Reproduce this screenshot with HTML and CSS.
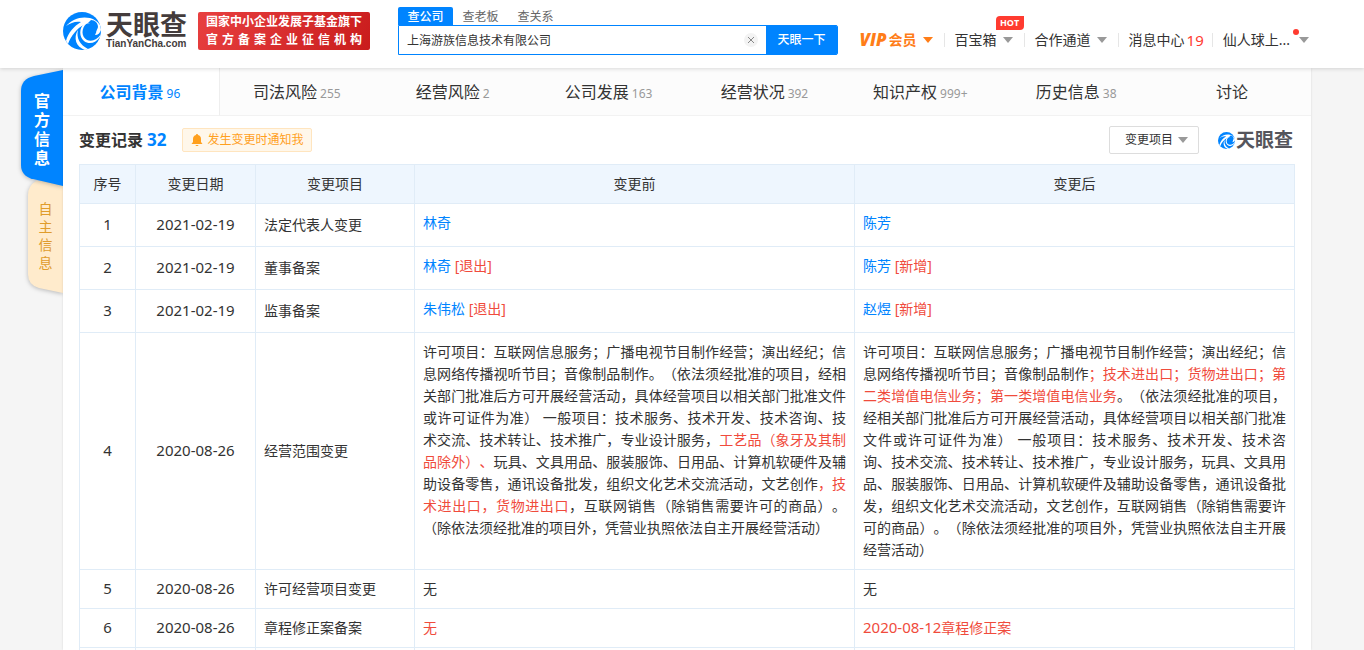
FILE: index.html
```html
<!DOCTYPE html>
<html lang="zh-CN">
<head>
<meta charset="utf-8">
<title>上海游族信息技术有限公司 - 天眼查</title>
<link rel="stylesheet" href="styles.css">
</head>
<body>
<svg class="defs" width="0" height="0" aria-hidden="true">
  <symbol id="swirl" viewBox="0 0 38 38">
    <circle cx="19" cy="19" r="19" fill="#0084ff"/>
    <path d="M3 14C9 7 18 4 27 6C31 7 34 9 37 13L38 18C37 21 35 23 32 23C34 20 34 16 32 13C29 10 25 11 21 13C14 16 8 24 5 32L3 29C5 21 11 14 18 10C12 9 8 11 3 14Z" fill="#fff"/>
    <path d="M24 11C18 16 18 25 24 28C29 30 34 28 38 22L37 25C33 31 26 33 21 29C16 25 16 16 21 12Z" fill="#fff"/>
    <path d="M15 18C13 26 17 33 25 37L22 38C13 35 10 26 15 18Z" fill="#fff"/>
    <path d="M28 8C32 8 35 11 35 15C34 19 31 22 27 22C25 22 24 21 24 20C29 20 32 16 30 13C29 11 27 11 25 11Z" fill="#0084ff"/>
  </symbol>
</svg>

<header class="header">
  <a class="logo" href="#">
    <svg class="logo-icon" aria-hidden="true"><use href="#swirl"/></svg>
    <span class="logo-text">
      <span class="logo-cn">天眼查</span>
      <span class="logo-en">TianYanCha.com</span>
    </span>
  </a>
  <div class="badge">
    <p>国家中小企业发展子基金旗下</p>
    <p>官方备案企业征信机构</p>
  </div>
  <form class="search">
    <div class="search-tabs">
      <button type="button" class="search-tab active">查公司</button>
      <button type="button" class="search-tab">查老板</button>
      <button type="button" class="search-tab">查关系</button>
    </div>
    <div class="search-box">
      <input class="search-input" type="text" aria-label="搜索公司" value="上海游族信息技术有限公司">
      <button type="reset" class="clear" aria-label="清空">
        <svg width="6" height="6" viewBox="0 0 6 6"><path d="M0 0L6 6M6 0L0 6" stroke="#888" fill="none"/></svg>
      </button>
      <button type="submit" class="search-btn">天眼一下</button>
    </div>
  </form>
  <nav class="nav">
    <a href="#" class="vip"><i>VIP</i>会员<span class="caret"></span></a>
    <a href="#">百宝箱<span class="caret"></span><em class="hot">HOT</em></a>
    <a href="#">合作通道<span class="caret"></span></a>
    <a href="#" class="messages">消息中心<span class="msg-count">19</span></a>
    <a href="#" class="user">仙人球上...<span class="caret"></span><span class="dot"></span></a>
  </nav>
</header>

<div class="page">
  <aside class="side">
    <a href="#" class="side-tab official">
      <svg viewBox="0 0 42 116" preserveAspectRatio="none" aria-hidden="true"><path d="M42 0L13 6Q0 9 0 21V95Q0 106 12 109L42 116Z" fill="#0084ff"/></svg>
      <span>官方信息</span>
    </a>
    <a href="#" class="side-tab own">
      <svg viewBox="0 0 35 112" preserveAspectRatio="none" aria-hidden="true"><path d="M35 0H8Q0 5 0 14V93Q0 104 11 107L35 112Z" fill="#ffebcc"/></svg>
      <span>自主信息</span>
    </a>
  </aside>

  <main class="main">
    <nav class="tabs">
      <a href="#" class="tab active">公司背景<span>96</span></a>
      <a href="#" class="tab">司法风险<span>255</span></a>
      <a href="#" class="tab">经营风险<span>2</span></a>
      <a href="#" class="tab">公司发展<span>163</span></a>
      <a href="#" class="tab">经营状况<span>392</span></a>
      <a href="#" class="tab">知识产权<span>999+</span></a>
      <a href="#" class="tab">历史信息<span>38</span></a>
      <a href="#" class="tab">讨论</a>
    </nav>

    <section class="content">
      <div class="title-row">
        <h2>变更记录<span>32</span></h2>
        <button type="button" class="notify">
          <svg width="12" height="14" viewBox="0 0 12 14" aria-hidden="true"><path d="M6 1C6.700 1 7 1.500 7 2C9 2.500 10 4 10 6V9L11.500 11H.5L2 9V6C2 4 3 2.500 5 2C5 1.500 5.300 1 6 1ZM4.500 12H7.500C7.300 13.300 4.700 13.300 4.500 12Z" fill="#ffa01e"/></svg>
          发生变更时通知我
        </button>
        <div class="filter">
          <select aria-label="变更项目"><option>变更项目</option></select>
          <span class="caret"></span>
        </div>
        <div class="mini-logo">
          <svg aria-hidden="true"><use href="#swirl"/></svg>
          <span>天眼查</span>
        </div>
      </div>

      <table class="records">
        <colgroup><col class="c-no"><col class="c-date"><col class="c-item"><col><col></colgroup>
        <thead>
          <tr><th>序号</th><th>变更日期</th><th>变更项目</th><th>变更前</th><th>变更后</th></tr>
        </thead>
        <tbody>
          <tr>
            <td class="num">1</td><td class="num">2021-02-19</td><td>法定代表人变更</td>
            <td><div class="person"><a href="#">林奇</a></div></td>
            <td><div class="person"><a href="#">陈芳</a></div></td>
          </tr>
          <tr>
            <td class="num">2</td><td class="num">2021-02-19</td><td>董事备案</td>
            <td><div class="person"><a href="#">林奇</a> <span class="red">[退出]</span></div></td>
            <td><div class="person"><a href="#">陈芳</a> <span class="red">[新增]</span></div></td>
          </tr>
          <tr>
            <td class="num">3</td><td class="num">2021-02-19</td><td>监事备案</td>
            <td><div class="person"><a href="#">朱伟松</a> <span class="red">[退出]</span></div></td>
            <td><div class="person"><a href="#">赵煜</a> <span class="red">[新增]</span></div></td>
          </tr>
          <tr>
            <td class="num">4</td><td class="num">2020-08-26</td><td>经营范围变更</td>
            <td class="scope">许可项目：互联网信息服务；广播电视节目制作经营；演出经纪；信息网络传播视听节目；音像制品制作。（依法须经批准的项目，经相关部门批准后方可开展经营活动，具体经营项目以相关部门批准文件或许可证件为准） 一般项目：技术服务、技术开发、技术咨询、技术交流、技术转让、技术推广，专业设计服务，<span class="red">工艺品（象牙及其制品除外）、</span>玩具、文具用品、服装服饰、日用品、计算机软硬件及辅助设备零售，通讯设备批发，组织文化艺术交流活动，文艺创作<span class="red">，技术进出口，货物进出口</span>，互联网销售（除销售需要许可的商品）。（除依法须经批准的项目外，凭营业执照依法自主开展经营活动）</td>
            <td class="scope">许可项目：互联网信息服务；广播电视节目制作经营；演出经纪；信息网络传播视听节目；音像制品制作<span class="red">；技术进出口；货物进出口；第二类增值电信业务；第一类增值电信业务</span>。（依法须经批准的项目，经相关部门批准后方可开展经营活动，具体经营项目以相关部门批准文件或许可证件为准） 一般项目：技术服务、技术开发、技术咨询、技术交流、技术转让、技术推广，专业设计服务，玩具、文具用品、服装服饰、日用品、计算机软硬件及辅助设备零售，通讯设备批发，组织文化艺术交流活动，文艺创作，互联网销售（除销售需要许可的商品）。（除依法须经批准的项目外，凭营业执照依法自主开展经营活动）</td>
          </tr>
          <tr>
            <td class="num">5</td><td class="num">2020-08-26</td><td>许可经营项目变更</td><td>无</td><td>无</td>
          </tr>
          <tr>
            <td class="num">6</td><td class="num">2020-08-26</td><td>章程修正案备案</td>
            <td class="red">无</td><td class="red"><span class="digits">2020-08-12</span>章程修正案</td>
          </tr>
          <tr><td></td><td></td><td></td><td></td><td></td></tr>
        </tbody>
      </table>
    </section>
  </main>
</div>
</body>
</html>
```
FILE: styles.css
```css
* { box-sizing: border-box; }

html { height: 100%; overflow: hidden; }

body {
  margin: 0;
  height: 100%;
  overflow: hidden;
  display: flex;
  flex-direction: column;
  background: #f5f5f5;
  color: #333;
  font: 14px/22px "Noto Sans", "Noto Sans CJK SC", sans-serif;
  text-spacing-trim: space-all;
}

a { color: inherit; text-decoration: none; }
button, input, select { font: inherit; color: inherit; margin: 0; padding: 0; border: 0; background: none; }
p, h2 { margin: 0; }
.defs { position: absolute; }

.caret {
  display: inline-block;
  border: 5px solid transparent;
  border-top: 6px solid #999;
  border-bottom: 0;
}

/* Header */
.header {
  position: relative;
  z-index: 2;
  flex: none;
  display: flex;
  align-items: flex-start;
  height: 68px;
  padding: 0 55px 0 63px;
  background: #fff;
  box-shadow: 0 1px 4px rgba(0, 0, 0, .14);
}

.logo { display: flex; gap: 5px; margin-top: 12px; }
.logo-icon { width: 38px; height: 38px; }
.logo-text { display: flex; flex-direction: column; width: 82px; color: #443c3c; }
.logo-cn { font-size: 27px; line-height: 26px; font-weight: 700; }
.logo-en { font: 700 10px/12px "Liberation Sans", sans-serif; }

.badge {
  width: 172px;
  height: 38px;
  margin: 12px 0 0 10px;
  padding: 1px 8px;
  border-radius: 2px;
  background: linear-gradient(120deg, #e84040, #c91c1c);
  color: #fff;
  font-size: 12px;
  line-height: 18px;
  font-weight: 700;
}
.badge p { text-align-last: justify; text-justify: inter-character; white-space: nowrap; }

.search { width: 440px; margin: 7px 0 0 28px; font-size: 12px; }
.search-tabs { display: flex; height: 18px; }
.search-tab { width: 55px; line-height: 19px; color: #666; }
.search-tab.active { background: #0084ff; color: #fff; font-weight: 500; border-radius: 2px 2px 0 0; }
.search-box { display: flex; align-items: center; height: 30px; border: 1px solid #0084ff; border-radius: 0 2px 2px 0; }
.search-input { flex: 1; min-width: 0; height: 28px; padding-left: 8px; outline: 0; }
.clear { display: flex; align-items: center; justify-content: center; width: 14px; height: 14px; margin-right: 8px; border-radius: 50%; background: #f3f3f3; }
.search-btn { width: 71px; height: 30px; background: #0084ff; color: #fff; font-weight: 500; border-radius: 0 2px 2px 0; }

.nav { display: flex; margin: 29px 0 0 auto; white-space: nowrap; }
.nav a { position: relative; display: flex; align-items: center; padding: 0 11px; }
.nav a + a::before { content: ""; position: absolute; left: 0; top: 4px; height: 14px; border-left: 1px solid #e6e6e6; }
.nav .messages { padding-right: 8px; }
.nav .user { padding-right: 0; }
.nav .caret { margin-left: 6px; }
.nav .user .caret { margin-left: 9px; }
.nav .vip { color: #ff7d18; font-weight: 700; }
.vip i { font: italic 800 17px/22px "Open Sans", sans-serif; margin-right: 2px; }
.nav .vip .caret { border-top-color: #ff7d18; }
.hot {
  position: absolute;
  top: -13px;
  right: 0;
  width: 28px;
  border-radius: 4px 0 4px 0;
  background: #ff3b30;
  color: #fff;
  font: 700 9px/14px "Open Sans", sans-serif;
  text-align: center;
}
.msg-count { margin-left: 2px; font-size: 15px; color: #ff3b30; }
.dot { position: absolute; right: 10px; top: 0; width: 6px; height: 6px; border-radius: 50%; background: #ff3b30; }

/* Page body */
.page { flex: 1; min-height: 0; display: flex; padding-right: 53px; }

.side { flex: none; width: 63px; display: flex; flex-direction: column; align-items: flex-end; padding-top: 2px; }
.side-tab { position: relative; display: flex; justify-content: center; text-align: center; }
.side-tab svg { position: absolute; inset: 0; width: 100%; height: 100%; filter: drop-shadow(0 1px 2px rgba(0, 0, 0, .25)); }
.side-tab span { position: relative; width: 16px; }
.official { z-index: 1; width: 42px; height: 116px; padding-top: 22px; color: #fff; font-size: 16px; line-height: 19px; font-weight: 700; }
.own { width: 35px; height: 112px; margin-top: -5px; padding-top: 19px; color: #e09c2b; line-height: 18px; }

.main { position: relative; z-index: 1; flex: 1; min-width: 0; overflow: hidden; background: #fff; box-shadow: 0 0 2px rgba(0, 0, 0, .12); }

.tabs { display: flex; height: 48px; }
.tab {
  flex: 1;
  display: flex;
  justify-content: center;
  align-items: baseline;
  gap: 3px;
  padding: 13px 2px 0 0;
  background: #fcfcfc;
  border-bottom: 1px solid #f2f2f2;
  font-size: 16px;
}
.tab span { font-size: 12px; color: #999; }
.tab.active { background: #fff; border-right: 1px solid #eee; color: #0084ff; font-weight: 700; }
.tab.active span { color: #0084ff; font-weight: 400; }

.content { padding: 10px 16px 0; }

.title-row { display: flex; align-items: center; height: 28px; margin-bottom: 10px; }
.title-row h2 { font-size: 16px; font-weight: 700; }
.title-row h2 span { margin-left: 4px; color: #0084ff; font-size: 17px; }
.notify {
  display: flex;
  align-items: center;
  gap: 4px;
  height: 24px;
  margin-left: 16px;
  padding: 0 8px;
  border: 1px solid #ffe5bf;
  border-radius: 2px;
  background: #fff7ea;
  color: #ffa01e;
  font-size: 12px;
}
.filter { position: relative; margin-left: auto; }
.filter select { display: block; width: 90px; height: 28px; padding-left: 15px; border: 1px solid #ddd; border-radius: 2px; appearance: none; font-size: 12px; }
.filter .caret { position: absolute; right: 11px; top: 11px; pointer-events: none; }
.mini-logo { display: flex; align-items: center; gap: 1px; margin: 0 2px 0 19px; color: #55555c; font-size: 19px; font-weight: 700; }
.mini-logo svg { width: 17px; height: 17px; }

.records { width: 100%; table-layout: fixed; border-collapse: collapse; }
.c-no { width: 56px; }
.c-date { width: 120px; }
.c-item { width: 159px; }
.records th, .records td { padding: 8px; border: 1px solid #e0ecf7; }
.records th { background: #eef6fe; font-weight: 400; text-align: center; }
.records td { text-align: left; }
.records .num { padding: 7px 8px 9px; text-align: center; font-size: 15px; }
.digits { font-size: 15px; line-height: 20px; }
.person { padding-bottom: 4px; }
.person a { color: #0084ff; }
.records .scope { text-align: justify; vertical-align: top; }
.red { color: #f04b3c; }
```
